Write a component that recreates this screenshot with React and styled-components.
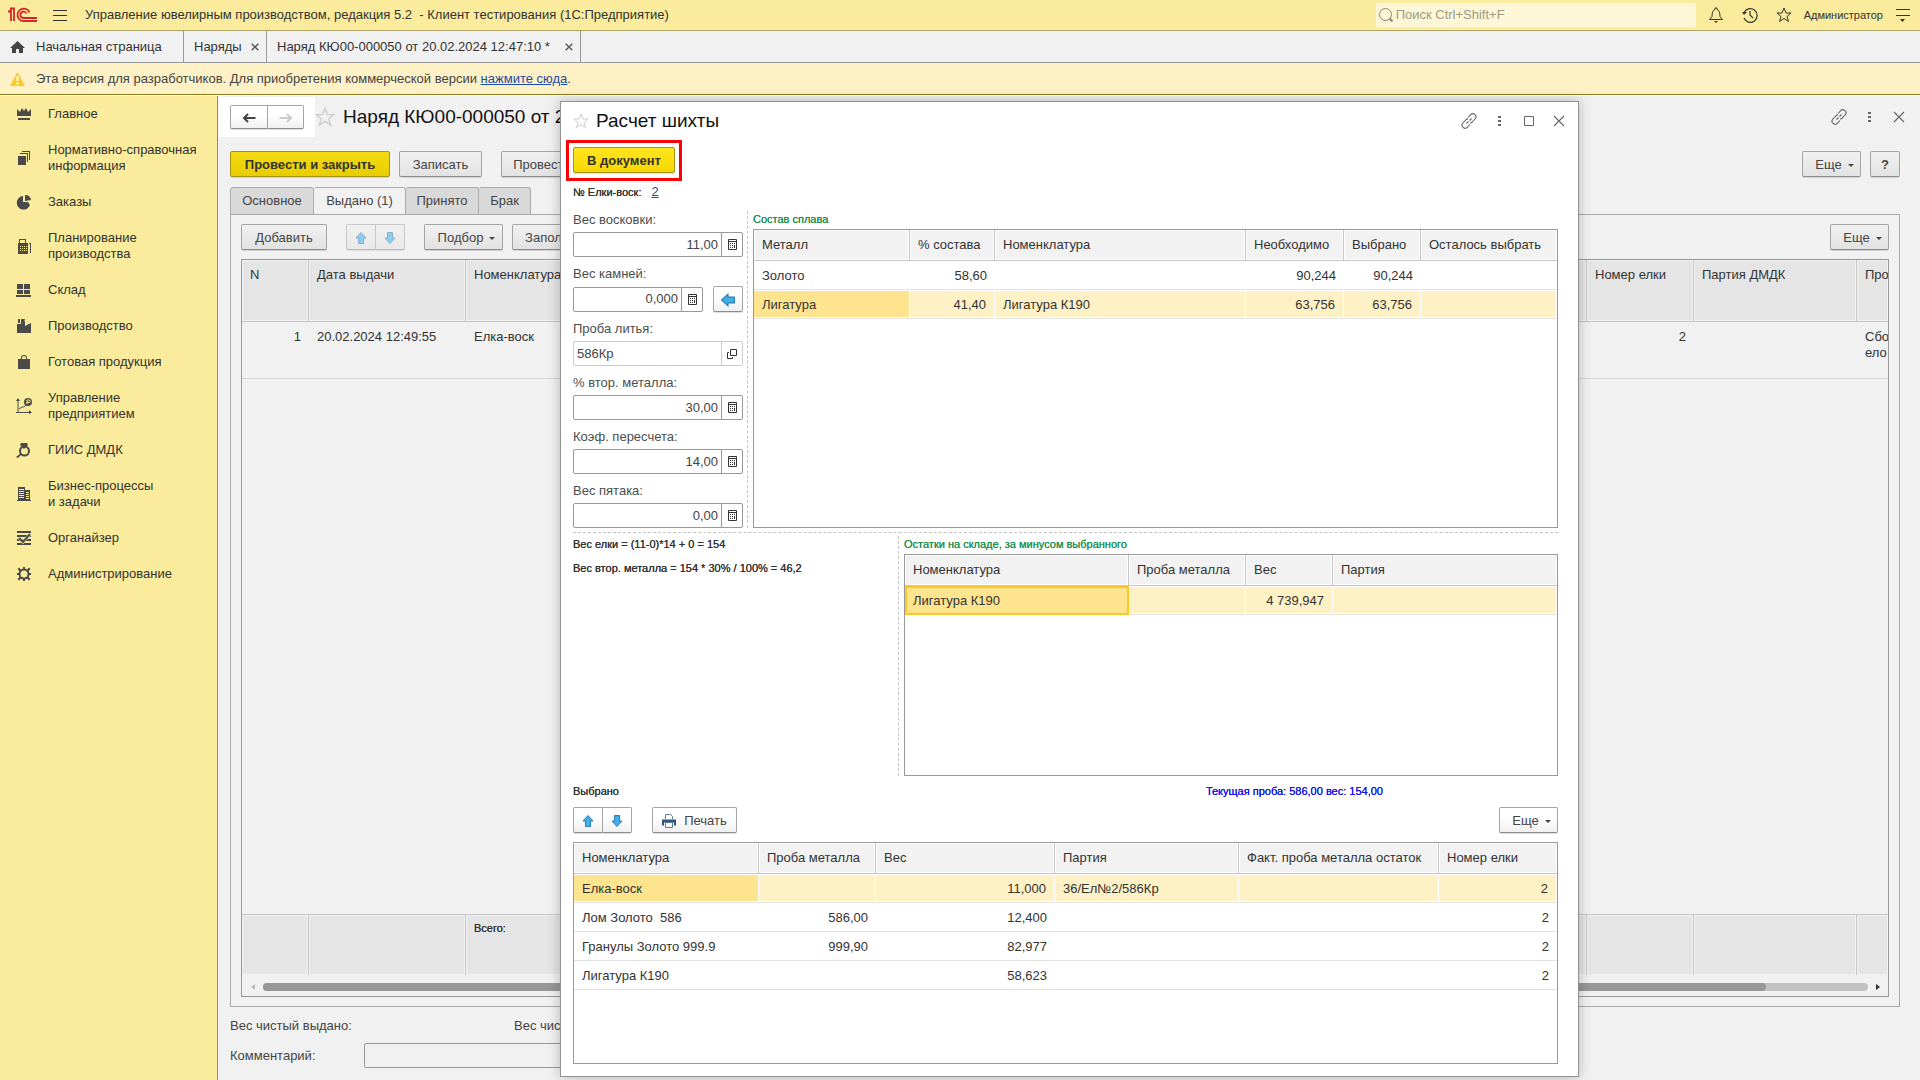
import { useState } from 'react';
import styled, { createGlobalStyle, css } from 'styled-components';

const GlobalStyle = createGlobalStyle`
  * {
    box-sizing: border-box;
  }
  body {
    margin: 0;
    font-family: "Liberation Sans", Arial, sans-serif;
    font-size: 13px;
    line-height: 16px;
    color: #333;
    overflow: hidden;
  }
  button, input {
    font: inherit;
    color: inherit;
  }
  svg {
    display: block;
    flex: none;
  }
`;

const Window = styled.div`
  position: relative;
  display: flex;
  flex-direction: column;
  height: 100vh;
  background-color: #f1f1f1;
`;

const TitleBar = styled.header`
  display: flex;
  align-items: center;
  height: 31px;
  padding: 0 3px 0 8px;
  background-color: #faec9c;
  border-bottom: 1px solid #aca469;
`;

const AppTitle = styled.div`
  flex: 1;
  margin-left: 3px;
  white-space: pre;
`;

const IconButton = styled.button`
  display: flex;
  align-items: center;
  justify-content: center;
  width: ${props => props.$width || 30}px;
  height: 24px;
  padding: 0;
  border: none;
  background: none;
  color: ${props => props.$color || '#666'};
`;

const SearchBox = styled.label`
  display: flex;
  align-items: center;
  width: 320px;
  height: 24px;
  margin-right: 3px;
  padding-left: 2px;
  border-radius: 2px;
  background-color: #fdf7d8;
  color: #8c886f;
`;

const SearchInput = styled.input`
  flex: 1;
  margin-left: 2px;
  padding: 0;
  border: none;
  outline: none;
  background: none;
  &::placeholder {
    color: #a09b84;
    opacity: 1;
  }
`;

const User = styled.div`
  margin: 0 6px 0 3px;
  font-size: 11px;
`;

const WindowTabs = styled.nav`
  display: flex;
  height: 32px;
  background-color: #f1f1f1;
  border-bottom: 1px solid #999;
`;

const WindowTab = styled.div`
  display: flex;
  align-items: center;
  justify-content: ${props => props.$home ? 'flex-start' : 'space-between'};
  gap: 8px;
  width: ${props => props.$width}px;
  height: 31px;
  padding: 0 7px 0 10px;
  border-right: 1px solid #999;
`;

const HomeIconBox = styled.span`
  width: 18px;
`;

const CloseTab = styled.button`
  display: flex;
  padding: 0;
  border: none;
  background: none;
  color: #555;
`;

const Notice = styled.div`
  display: flex;
  align-items: center;
  gap: 11px;
  height: 32px;
  padding-left: 10px;
  background-color: #fef1c5;
  border-bottom: 1px solid #8f7a1c;
  color: #444;
`;

const Link = styled.a`
  color: #1b4ca8;
`;

const Workspace = styled.div`
  flex: 1;
  display: flex;
  min-height: 0;
  border-top: 1px solid #fff;
`;

const Sidebar = styled.nav`
  width: 218px;
  border-right: 1px solid #97904f;
  background-color: #faec9c;
`;

const SidebarItem = styled.a`
  display: flex;
  align-items: center;
  gap: 16px;
  padding: 10px 0 10px 16px;
  color: #333;
  text-decoration: none;
  white-space: pre-line;
`;

const Form = styled.main`
  flex: 1;
  display: flex;
  flex-direction: column;
  min-width: 0;
  padding: 1px 20px 12px 1px;
`;

const FormHead = styled.div`
  display: flex;
  align-items: center;
  height: 40px;
  margin-right: -14px;
`;

const NavBox = styled.div`
  display: flex;
  padding: 8px 11px;
  background-color: #fff;
`;

const FormTitle = styled.h1`
  margin: 0 0 0 8px;
  font-size: 19px;
  font-weight: normal;
  line-height: 24px;
  color: #111;
  white-space: nowrap;
`;

const Row = styled.div`
  display: flex;
  align-items: center;
  gap: ${props => props.$gap || 0}px;
  margin-top: ${props => props.$top || 0}px;
`;

const FormBody = styled.div`
  flex: 1;
  display: flex;
  flex-direction: column;
  padding: 14px 0 0 11px;
  min-height: 0;
`;

const Spacer = styled.span`
  flex: 1;
`;

const Button = styled.button`
  display: flex;
  align-items: center;
  justify-content: center;
  gap: ${props => props.$menu ? 6 : 8}px;
  flex: none;
  width: ${props => props.$width}px;
  height: ${props => props.$height || 26}px;
  padding: 1px 0 0 ${props => props.$menu ? 6 : 0}px;
  border: 1px solid #a5a5a5;
  border-bottom-color: #8c8c8c;
  border-radius: 2px;
  box-shadow: 0 1px 0 rgba(0, 0, 0, 0.12);
  background: ${props => props.$dim
    ? 'linear-gradient(#f1f1f1, #e2e2e2)'
    : 'linear-gradient(#fff 40%, #f0f0f0)'};
  color: #444;
  white-space: nowrap;

  ${props => props.$primary && css`
    border-color: #a39213;
    background: ${props.$dim
      ? 'linear-gradient(#f3da12, #e8cd00)'
      : 'linear-gradient(#ffe51f, #f8d800)'};
    color: #333;
    font-weight: bold;
  `}
`;

const ButtonPair = styled.div`
  display: flex;
  opacity: ${props => props.$faded ? 0.55 : 1};
  ${Button}:first-child {
    border-radius: 2px 0 0 2px;
  }
  ${Button}:last-child {
    border-left: none;
    border-radius: 0 2px 2px 0;
  }
`;

const PageTabs = styled.div`
  display: flex;
  margin-top: 10px;
`;

const PageTab = styled.button`
  height: 28px;
  width: ${props => props.$width}px;
  margin-bottom: -1px;
  padding: 0;
  border: 1px solid #aaa;
  border-left-width: ${props => props.$first ? 1 : 0}px;
  border-bottom-color: ${props => props.$active ? '#f1f1f1' : '#aaa'};
  border-radius: 3px 3px 0 0;
  background-color: ${props => props.$active ? '#f1f1f1' : '#d9d9d9'};
  color: #444;
`;

const PagePanel = styled.section`
  flex: 1;
  display: flex;
  flex-direction: column;
  padding: 9px 10px;
  border: 1px solid #aaa;
  min-height: 0;
`;

const GridFrame = styled.div`
  display: flex;
  flex-direction: column;
  flex: ${props => props.$fill ? 1 : 'none'};
  height: ${props => props.$height ? `${props.$height}px` : 'auto'};
  margin-top: ${props => props.$top || 0}px;
  border: 1px solid #999;
  overflow: hidden;
`;

const Grid = styled.table`
  width: 100%;
  table-layout: fixed;
  border-collapse: separate;
  border-spacing: 0;
`;

const Th = styled.th`
  height: ${props => props.$height || 31}px;
  padding: ${props => props.$height ? 7 : 0}px 8px 0;
  border-right: 1px solid #c6c6c6;
  border-bottom: 1px solid #c6c6c6;
  background-color: ${props => props.$dim ? '#e5e5e5' : '#f2f2f2'};
  box-shadow: inset 0 0 0 1px ${props => props.$dim ? '#f1f1f1' : '#fff'};
  font-weight: normal;
  text-align: left;
  vertical-align: ${props => props.$height ? 'top' : 'middle'};
  white-space: nowrap;
  &:last-child {
    border-right: none;
  }
`;

const Td = styled.td`
  height: ${props => props.$height || 29}px;
  padding: ${props => props.$height ? 7 : 1}px 8px 0;
  border-bottom: 1px solid ${props => props.$height ? '#d6d6d6' : '#e2e2e2'};
  text-align: ${props => props.$right ? 'right' : 'left'};
  vertical-align: ${props => props.$height ? 'top' : 'middle'};
  white-space: pre;

  ${props => props.$selected && css`
    border-right: 1px solid #fff;
    background-color: #fef1c5;
    box-shadow: inset 0 1px 0 #fff, inset 0 -1px 0 #fff;
    &:first-child {
      background-color: #ffe48f;
    }
  `}
  ${props => props.$focused && css`
    padding-left: 6px;
    padding-right: 6px;
    box-shadow: none;
    border: 2px solid #fbc927;
  `}
`;

const TotalTd = styled(Th).attrs({ as: 'td' })`
  border-top: 1px solid #c6c6c6;
  border-bottom: none;
  padding-top: 5px;
  font-size: 11px;
  text-shadow: 0 0 0 currentColor;
`;

const ScrollBar = styled.div`
  display: flex;
  align-items: center;
  gap: 8px;
  height: 21px;
  padding: 2px 8px 0 9px;
`;

const ScrollTrack = styled.div`
  flex: 1;
  height: 8px;
  border-radius: 4px;
  background-color: #c2c2c2;
`;

const ScrollThumb = styled.div`
  width: calc(100% - 102px);
  height: 8px;
  border-radius: 4px;
  background-color: #979797;
`;

const FooterCell = styled.div`
  width: 284px;
  color: #444;
`;

const CommentLabel = styled.label`
  width: 134px;
  color: #444;
`;

const CommentInput = styled.input`
  width: 700px;
  height: 25px;
  border: 1px solid #999;
  border-radius: 2px;
  background-color: #f1f1f1;
`;

/* modal window above the form */
const Dialog = styled.section`
  position: absolute;
  top: 101px;
  right: 341px;
  bottom: 3px;
  left: 560px;
  display: flex;
  flex-direction: column;
  padding: 4px 20px 12px 12px;
  border: 1px solid #929292;
  background-color: #fff;
  box-shadow: 0 0 12px rgba(0, 0, 0, 0.25);
`;

const DialogHead = styled.div`
  display: flex;
  align-items: center;
  height: 30px;
  margin-right: -16px;
`;

const DialogTitle = styled.h2`
  flex: 1;
  margin: 0 0 0 7px;
  font-size: 19px;
  font-weight: normal;
  line-height: 24px;
  color: #111;
`;

const Highlight = styled.div`
  align-self: flex-start;
  margin: 4px 0 0 -7px;
  padding: 4px 4px 5px;
  border: 3px solid #fb0007;
`;

/* small emphasised text: regular width, drawn heavier */
const Note = styled.div`
  font-size: 11px;
  text-shadow: 0 0 0 currentColor;
  color: ${props => props.$color || '#333'};
`;

const Columns = styled.div`
  display: flex;
  margin-top: ${props => props.$top || 0}px;
`;

const Fields = styled.div`
  width: 175px;
  padding-right: 4px;
  border-right: 1px dashed #c4c4c4;
`;

const Notes = styled.div`
  display: flex;
  flex-direction: column;
  gap: 8px;
  width: 326px;
  border-right: 1px dashed #c4c4c4;
`;

const Pane = styled.div`
  flex: 1;
  min-width: 0;
  padding-left: 5px;
`;

const Divider = styled.hr`
  width: 100%;
  margin: 4px 0 3px;
  border: none;
  border-top: 1px dashed #c4c4c4;
`;

const FieldBox = styled.div`
  & + & {
    margin-top: 8px;
  }
`;

const FieldLabel = styled.label`
  display: block;
  padding: 1px 0 4px;
  color: #4d4d4d;
`;

const InputGroup = styled.div`
  flex: 1;
  display: flex;
  min-width: 0;
  height: 25px;
  border: 1px solid ${props => props.$light ? '#ccc' : '#999'};
  border-radius: 2px;
`;

const FieldInput = styled.input`
  flex: 1;
  width: 100%;
  min-width: 0;
  padding: 0 3px;
  border: none;
  outline: none;
  background: none;
  text-align: ${props => props.$left ? 'left' : 'right'};
  color: #444;
`;

const FieldButton = styled.button`
  display: flex;
  align-items: center;
  justify-content: center;
  flex: none;
  width: 21px;
  padding: 0;
  border: none;
  border-left: 1px solid ${props => props.$light ? '#ccc' : '#999'};
  background: none;
  color: #333;
`;

const Summary = styled.div`
  display: flex;
  align-items: center;
  height: 16px;
  margin-top: 7px;
`;

const SummaryTotal = styled(Note)`
  margin-right: 175px;
`;

const sideIcons = {
  crown: <path d="M1 3l3 3 2-4 2 3 2-3 2 4 3-3v7H1zM2 12h12v2H2z" />,
  books: <path d="M2 6h8v9H2zM4 3h8v9h-1V4H4zM6 1h8v9h-1V2H6z" />,
  pie: <path d="M7 2v6h5l2 3A6.800 6.800 0 1 1 7 2zM9 1a6 6 0 0 1 6 5l-6 1z" />,
  register: (
    <>
      <path d="M3 1h7v4h2v11H2V5h1zm1 1v3h5V2zM13 5h2v10h-1V6h-1z" fillRule="evenodd" />
      <path d="M4 8.500h7M4 10.500h7M4 12.500h7" stroke="#faec9c" strokeDasharray="1 1" />
    </>
  ),
  boxes: <path d="M1 2h6v5H1zM8 2h6v5H8zM1 8h6v4H1zM8 8h6v4H8zM0 13h15v2H0z" />,
  factory: <path d="M2 1h2v4H2zM5 1h4l-1 3-3 1zM1 6h3l5-3v5l6-3v10H1z" />,
  bag: <path d="M2 5h12v10H2zM5 7V4a3 3 0 0 1 6 0v3h-1V4a2 2 0 0 0-4 0v3z" />,
  chart: (
    <>
      <path d="M2 0l2 3H2.500v11H13v-2l3 2.500L13 16v-1H0v-1h1.500V3H0z" />
      <path d="M3 11l3-2h2l3-3" fill="none" stroke="currentColor" />
      <circle cx="12" cy="4" r="4" />
      <path d="M11 6V2h2a1 1 0 0 1 0 2.500h-2.500" fill="none" stroke="#faec9c" />
    </>
  ),
  ring: (
    <>
      <path d="M5 1h6l1 2-4 4-4-4z" />
      <circle cx="8.500" cy="9" r="4.500" fill="none" stroke="currentColor" strokeWidth="2" />
      <path d="M5 11l-5 4 2 1 4-4z" />
    </>
  ),
  building: (
    <>
      <path d="M2 1h7v13H2zM9 4h5v10H9zM1 14h14v1H1z" />
      <path d="M3 3.500h5M3 5.500h5M3 7.500h5M3 9.500h5M3 11.500h5M10 6.500h3M10 8.500h3M10 10.500h3M10 12.500h3" stroke="#faec9c" />
    </>
  ),
  organizer: (
    <>
      <path d="M1 1h14v2H1zM1 5h14v2H1zM1 9h14v2H1zM1 13h14v2H1z" />
      <path d="M3 8l4 4 7-8" fill="none" stroke="#faec9c" strokeWidth="3" />
      <path d="M3 8l4 4 7-8" fill="none" stroke="currentColor" strokeWidth="2" />
    </>
  ),
  gear: (
    <>
      <circle cx="8" cy="8" r="4.500" fill="none" stroke="currentColor" strokeWidth="2" />
      <path d="M7 1h2v3H7zM7 12h2v3H7zM1 7h3v2H1zM12 7h3v2h-3zM3 1.500L5.500 4 4 5.500 1.500 3zM13 1.500L10.500 4 12 5.500 14.500 3zM3 14.500L5.500 12 4 10.500 1.500 13zM13 14.500L10.500 12 12 10.500 14.500 13z" />
    </>
  ),
};

const SideIcon = ({ name }) => (
  <svg width="16" height="16" viewBox="0 0 16 16" fill="currentColor" color="#4a4a4a">{sideIcons[name]}</svg>
);

const Logo = () => (
  <svg width="30" height="16" viewBox="0 0 30 16" fill="none" stroke="#d8232a" strokeWidth="1.800">
    <path d="M0 4.500h1.500L3 3v11" />
    <path d="M2 1.500h4V14" />
    <path d="M21.500 5.500A6.200 6.200 0 1 0 15.500 14H29" />
    <path d="M18.500 6.500A3.200 3.200 0 1 0 15.500 11H29" />
  </svg>
);

const StarIcon = ({ size = 16, color = 'currentColor' }) => (
  <svg width={size} height={size} viewBox="0 0 16 16" fill="none" stroke={color} strokeWidth="1">
    <path d="M8 1l2 5h5l-4 3.500 1.500 5L8 11.500l-4.500 3 1.500-5L1 6h5z" />
  </svg>
);

const CloseIcon = ({ size = 12, width = 1.1 }) => (
  <svg width={size} height={size} viewBox="0 0 12 12" stroke="currentColor" strokeWidth={width}>
    <path d="M1 1l10 10M11 1L1 11" />
  </svg>
);

const ChainIcon = () => (
  <svg width="16" height="16" viewBox="0 0 16 16" fill="none" stroke="currentColor" strokeWidth="1.100">
    <path d="M7 4.500l2.500-2.700a3 3 0 0 1 4.600 4.200l-3 3.200a3 3 0 0 1-2 .9" />
    <path d="M9 11.500l-2.500 2.700A3 3 0 0 1 1.900 10l3-3.200a3 3 0 0 1 2-.9" />
    <path d="M5.500 10.500l2-2M8.500 7.500l2-2" />
  </svg>
);

const DotsIcon = () => (
  <svg width="3" height="13" fill="currentColor">
    <path d="M0 1h3v2H0zM0 5h3v2H0zM0 9h3v2H0z" />
  </svg>
);

const CalcIcon = () => (
  <svg width="9" height="11" viewBox="0 0 9 11" fill="none" stroke="currentColor">
    <path d="M.5.5h8v10h-8zM0 2.500h9" />
    <path d="M2 4.500h5M2 6.500h5M2 8.500h3" strokeDasharray="1 1" />
    <path d="M6.500 6v3" />
  </svg>
);

const OpenIcon = () => (
  <svg width="10" height="10" viewBox="0 0 10 10" fill="none" stroke="currentColor">
    <path d="M3.500.5h6v6h-6zM2 3.500H.5v6h5V8" />
  </svg>
);

const rotations = { up: 0, right: 90, down: 180, left: 270 };

const ArrowIcon = ({ dir, size = 12 }) => (
  <svg width={size} height={size} viewBox="0 0 12 12" fill="#41aeea" stroke="#2a7fb5" strokeWidth="1">
    <path d="M6 .5l5 5.500H8.500v5.500h-5V6H1z" transform={`rotate(${rotations[dir]} 6 6)`} />
  </svg>
);

const NavArrow = ({ back }) => (
  <svg width="14" height="10" viewBox="0 0 14 10" fill="none" stroke={back ? '#444' : '#ccc'} strokeWidth="2">
    <path d={back ? 'M13.500 5H2M6 1L2 5l4 4' : 'M.5 5H12M8 1l4 4-4 4'} />
  </svg>
);

const CaretIcon = () => (
  <svg width="6" height="5" fill="#444"><path d="M0 2h6L3 5z" /></svg>
);

const PrintIcon = () => (
  <svg width="14" height="14" viewBox="0 0 14 14" fill="none" stroke="#5b7a96">
    <path d="M3.500 5V.5h5l2 2V5" />
    <path d="M0 5.500h14v6h-2v-3H2v3H0z" fill="#2f577d" stroke="none" />
    <path d="M3.500 8.500h7v5h-7z" fill="#fff" />
  </svg>
);

const MoreButton = ({ dim }) => (
  <Button $menu $width={59} $dim={dim}>Еще <CaretIcon /></Button>
);

const sections = [
  ['crown', 'Главное'],
  ['books', 'Нормативно-справочная\nинформация'],
  ['pie', 'Заказы'],
  ['register', 'Планирование\nпроизводства'],
  ['boxes', 'Склад'],
  ['factory', 'Производство'],
  ['bag', 'Готовая продукция'],
  ['chart', 'Управление\nпредприятием'],
  ['ring', 'ГИИС ДМДК'],
  ['building', 'Бизнес-процессы\nи задачи'],
  ['organizer', 'Органайзер'],
  ['gear', 'Администрирование'],
];

const alloy = {
  columns: [
    { title: 'Металл', width: 156 },
    { title: '% состава', width: 85, right: true },
    { title: 'Номенклатура' },
    { title: 'Необходимо', width: 98, right: true },
    { title: 'Выбрано', width: 77, right: true },
    { title: 'Осталось выбрать', width: 136, right: true },
  ],
  rows: [
    ['Золото', '58,60', '', '90,244', '90,244', ''],
    ['Лигатура', '41,40', 'Лигатура К190', '63,756', '63,756', ''],
  ],
};

const stock = {
  columns: [
    { title: 'Номенклатура', width: 224 },
    { title: 'Проба металла', width: 117, right: true },
    { title: 'Вес', width: 87, right: true },
    { title: 'Партия' },
  ],
  rows: [['Лигатура К190', '', '4 739,947', '']],
};

const chosen = {
  columns: [
    { title: 'Номенклатура', width: 185 },
    { title: 'Проба металла', width: 117, right: true },
    { title: 'Вес', width: 179, right: true },
    { title: 'Партия' },
    { title: 'Факт. проба металла остаток', width: 200, right: true },
    { title: 'Номер елки', width: 118, right: true },
  ],
  rows: [
    ['Елка-воск', '', '11,000', '36/Ел№2/586Кр', '', '2'],
    ['Лом Золото  586', '586,00', '12,400', '', '', '2'],
    ['Гранулы Золото 999.9', '999,90', '82,977', '', '', '2'],
    ['Лигатура К190', '', '58,623', '', '', '2'],
  ],
};

function DataGrid({ data, selected, focused }) {
  return (
    <Grid>
      <colgroup>
        {data.columns.map(c => <col key={c.title} width={c.width} />)}
      </colgroup>
      <thead>
        <tr>{data.columns.map(c => <Th key={c.title}>{c.title}</Th>)}</tr>
      </thead>
      <tbody>
        {data.rows.map((row, i) => (
          <tr key={i}>
            {row.map((value, j) => (
              <Td
                key={j}
                $right={data.columns[j].right}
                $selected={i === selected}
                $focused={focused && i === selected && j === 0}
              >
                {value}
              </Td>
            ))}
          </tr>
        ))}
      </tbody>
    </Grid>
  );
}

function NumberField({ id, label, initial, children }) {
  const [value, setValue] = useState(initial);

  return (
    <FieldBox>
      <FieldLabel htmlFor={id}>{label}</FieldLabel>
      <Row $gap={10}>
        <InputGroup>
          <FieldInput id={id} value={value} onChange={e => setValue(e.target.value)} />
          <FieldButton aria-label="Калькулятор"><CalcIcon /></FieldButton>
        </InputGroup>
        {children}
      </Row>
    </FieldBox>
  );
}

function ChargeDialog() {
  return (
    <Dialog role="dialog" aria-labelledby="charge-title">
      <DialogHead>
        <StarIcon color="#ccc" />
        <DialogTitle id="charge-title">Расчет шихты</DialogTitle>
        <IconButton aria-label="Ссылка"><ChainIcon /></IconButton>
        <IconButton aria-label="Меню"><DotsIcon /></IconButton>
        <IconButton aria-label="Развернуть">
          <svg width="10" height="10" fill="none" stroke="currentColor"><path d="M.5.5h9v9h-9z" /></svg>
        </IconButton>
        <IconButton aria-label="Закрыть"><CloseIcon /></IconButton>
      </DialogHead>

      <Highlight>
        <Button $primary $width={102}>В документ</Button>
      </Highlight>

      <Row $gap={10} $top={3}>
        <Note>№ Елки-воск:</Note>
        <Link href="#tree">2</Link>
      </Row>

      <Columns $top={11}>
        <Fields>
          <NumberField id="wax" label="Вес восковки:" initial="11,00" />
          <NumberField id="stones" label="Вес камней:" initial="0,000">
            <Button $width={30} aria-label="Подставить"><ArrowIcon dir="left" size={14} /></Button>
          </NumberField>
          <FieldBox>
            <FieldLabel htmlFor="assay">Проба литья:</FieldLabel>
            <InputGroup $light>
              <FieldInput id="assay" $left readOnly value="586Кр" />
              <FieldButton $light aria-label="Открыть"><OpenIcon /></FieldButton>
            </InputGroup>
          </FieldBox>
          <NumberField id="secondary" label="% втор. металла:" initial="30,00" />
          <NumberField id="factor" label="Коэф. пересчета:" initial="14,00" />
          <NumberField id="button" label="Вес пятака:" initial="0,00" />
        </Fields>
        <Pane>
          <Note $color="#1c9350">Состав сплава</Note>
          <GridFrame $height={299} $top={2}>
            <DataGrid data={alloy} selected={1} />
          </GridFrame>
        </Pane>
      </Columns>

      <Divider />

      <Columns>
        <Notes>
          <Note>Вес елки = (11-0)*14 + 0 = 154</Note>
          <Note>Вес втор. металла = 154 * 30% / 100% = 46,2</Note>
        </Notes>
        <Pane>
          <Note $color="#1c9350">Остатки на складе, за минусом выбранного</Note>
          <GridFrame $height={222} $top={2}>
            <DataGrid data={stock} selected={0} focused />
          </GridFrame>
        </Pane>
      </Columns>

      <Summary>
        <Note>Выбрано</Note>
        <Spacer />
        <SummaryTotal $color="#1010f0">Текущая проба: 586,00 вес: 154,00</SummaryTotal>
      </Summary>

      <Row $top={8} $gap={20}>
        <ButtonPair>
          <Button $width={30} aria-label="Вверх"><ArrowIcon dir="up" /></Button>
          <Button $width={29} aria-label="Вниз"><ArrowIcon dir="down" /></Button>
        </ButtonPair>
        <Button $width={85}><PrintIcon /> Печать</Button>
        <Spacer />
        <MoreButton />
      </Row>

      <GridFrame $fill $top={9}>
        <DataGrid data={chosen} selected={0} />
      </GridFrame>
    </Dialog>
  );
}

const OrderColumns = () => (
  <colgroup>
    <col width="67" />
    <col width="157" />
    <col />
    <col width="107" />
    <col width="163" />
    <col width="31" />
  </colgroup>
);

function OrderForm() {
  return (
    <Form>
      <FormHead>
        <NavBox>
          <ButtonPair>
            <Button $width={38} $height={24} aria-label="Назад"><NavArrow back /></Button>
            <Button $width={36} $height={24} aria-label="Вперед"><NavArrow /></Button>
          </ButtonPair>
        </NavBox>
        <StarIcon size={20} color="#ccc" />
        <FormTitle>Наряд КЮ00-000050 от 20</FormTitle>
        <Spacer />
        <IconButton aria-label="Ссылка"><ChainIcon /></IconButton>
        <IconButton aria-label="Меню"><DotsIcon /></IconButton>
        <IconButton aria-label="Закрыть"><CloseIcon /></IconButton>
      </FormHead>

      <FormBody>
        <Row $gap={9}>
          <Button $primary $dim $width={160}>Провести и закрыть</Button>
          <Row $gap={19}>
            <Button $dim $width={83}>Записать</Button>
            <Button $dim $width={82}>Провести</Button>
          </Row>
          <Spacer />
          <MoreButton dim />
          <Button $dim $width={30}><b>?</b></Button>
        </Row>

        <PageTabs role="tablist">
          <PageTab $width={84} $first>Основное</PageTab>
          <PageTab $width={92} $active>Выдано (1)</PageTab>
          <PageTab $width={73}>Принято</PageTab>
          <PageTab $width={52}>Брак</PageTab>
        </PageTabs>

        <PagePanel>
          <Row $gap={19}>
            <Button $dim $width={86}>Добавить</Button>
            <ButtonPair $faded>
              <Button $dim $width={30} aria-label="Вверх"><ArrowIcon dir="up" /></Button>
              <Button $dim $width={29} aria-label="Вниз"><ArrowIcon dir="down" /></Button>
            </ButtonPair>
            <Row $gap={9}>
              <Button $dim $menu $width={79}>Подбор <CaretIcon /></Button>
              <Button $dim $width={90}>Заполнить</Button>
            </Row>
            <Spacer />
            <MoreButton dim />
          </Row>

          <GridFrame $fill $top={9}>
            <Grid>
              <OrderColumns />
              <thead>
                <tr>
                  <Th $dim $height={62}>N</Th>
                  <Th $dim $height={62}>Дата выдачи</Th>
                  <Th $dim $height={62}>Номенклатура</Th>
                  <Th $dim $height={62}>Номер елки</Th>
                  <Th $dim $height={62}>Партия ДМДК</Th>
                  <Th $dim $height={62}>Про</Th>
                </tr>
              </thead>
              <tbody>
                <tr>
                  <Td $height={57} $right>1</Td>
                  <Td $height={57}>20.02.2024 12:49:55</Td>
                  <Td $height={57}>Елка-воск</Td>
                  <Td $height={57} $right>2</Td>
                  <Td $height={57} />
                  <Td $height={57}>{'Сбо\nело'}</Td>
                </tr>
              </tbody>
            </Grid>
            <Spacer />
            <Grid>
              <OrderColumns />
              <tbody>
                <tr>
                  <TotalTd $dim $height={61} />
                  <TotalTd $dim $height={61} />
                  <TotalTd $dim $height={61}>Всего:</TotalTd>
                  <TotalTd $dim $height={61} />
                  <TotalTd $dim $height={61} />
                  <TotalTd $dim $height={61} />
                </tr>
              </tbody>
            </Grid>
            <ScrollBar>
              <svg width="4" height="6" fill="#bbb"><path d="M4 0v6L0 3z" /></svg>
              <ScrollTrack><ScrollThumb /></ScrollTrack>
              <svg width="4" height="6" fill="#333"><path d="M0 0v6l4-3z" /></svg>
            </ScrollBar>
          </GridFrame>
        </PagePanel>

        <Row $top={11}>
          <FooterCell>Вес чистый выдано:</FooterCell>
          <FooterCell>Вес чистый принято:</FooterCell>
        </Row>
        <Row $top={9}>
          <CommentLabel htmlFor="comment">Комментарий:</CommentLabel>
          <CommentInput id="comment" />
        </Row>
      </FormBody>
    </Form>
  );
}

function App() {
  return (
    <Window>
      <GlobalStyle />
      <TitleBar>
        <Logo />
        <IconButton $width={44} $color="#333" aria-label="Меню">
          <svg width="14" height="12" stroke="currentColor"><path d="M0 1.500h14M0 6.500h14M0 11.500h14" /></svg>
        </IconButton>
        <AppTitle>Управление ювелирным производством, редакция 5.2  - Клиент тестирования (1С:Предприятие)</AppTitle>
        <SearchBox>
          <svg width="16" height="16" viewBox="0 0 16 16" fill="none" stroke="currentColor">
            <circle cx="7.500" cy="7.500" r="6" />
            <path d="M11.500 11.500l3 3" strokeWidth="2" />
          </svg>
          <SearchInput aria-label="Поиск" placeholder="Поиск Ctrl+Shift+F" />
        </SearchBox>
        <IconButton $width={34} $color="#333" aria-label="Уведомления">
          <svg width="16" height="16" viewBox="0 0 16 16" fill="none" stroke="currentColor">
            <path d="M1.500 12.500l2.500-3c0-4 1-6.500 3-7V1h2v1.500c2 .5 3 3 3 7l2.500 3z" />
            <path d="M6 14h4l-2 2z" fill="currentColor" stroke="none" />
          </svg>
        </IconButton>
        <IconButton $width={34} $color="#333" aria-label="История">
          <svg width="16" height="16" viewBox="0 0 16 16" fill="none" stroke="currentColor" strokeWidth="1.200">
            <path d="M2 6a6.800 6.800 0 1 1 0 5M8 4v4l3 3" />
            <path d="M0 5h5L2 8z" fill="currentColor" stroke="none" />
          </svg>
        </IconButton>
        <IconButton $width={34} $color="#333" aria-label="Избранное"><StarIcon /></IconButton>
        <User>Администратор</User>
        <IconButton $width={28} $color="#333" aria-label="Настройки">
          <svg width="14" height="13" fill="currentColor"><path d="M0 0h14v1H0zM0 6h14v1H0zM4 10h5l-2.500 3z" /></svg>
        </IconButton>
      </TitleBar>

      <WindowTabs>
        <WindowTab $home $width={184}>
          <HomeIconBox>
            <svg width="15" height="14" viewBox="0 0 15 14" fill="#444"><path d="M7.500 1L15 8h-2v5H9V9H6v4H2V8H0z" /></svg>
          </HomeIconBox>
          Начальная страница
        </WindowTab>
        <WindowTab $width={83}>
          Наряды
          <CloseTab aria-label="Закрыть"><CloseIcon size={8} width={2} /></CloseTab>
        </WindowTab>
        <WindowTab $width={314}>
          Наряд КЮ00-000050 от 20.02.2024 12:47:10 *
          <CloseTab aria-label="Закрыть"><CloseIcon size={8} width={2} /></CloseTab>
        </WindowTab>
      </WindowTabs>

      <Notice>
        <svg width="15" height="14" viewBox="0 0 15 14">
          <path d="M7.500 0L15 14H0z" fill="#fbc91f" />
          <path d="M7.500 4v5M7.500 10.500v2" stroke="#fff" strokeWidth="2" />
        </svg>
        <span>
          Эта версия для разработчиков. Для приобретения коммерческой версии{' '}
          <Link href="#buy">нажмите сюда</Link>.
        </span>
      </Notice>

      <Workspace>
        <Sidebar>
          {sections.map(([icon, title]) => (
            <SidebarItem key={icon} href={`#${icon}`}>
              <SideIcon name={icon} />
              {title}
            </SidebarItem>
          ))}
        </Sidebar>
        <OrderForm />
      </Workspace>

      <ChargeDialog />
    </Window>
  );
}

export default App;
